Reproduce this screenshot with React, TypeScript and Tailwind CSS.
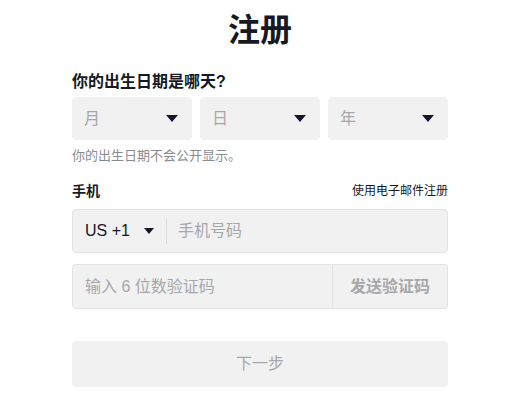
const Caret = ({ small }: { small?: boolean }) =>
  small ? (
    <svg width="10" height="6" viewBox="0 0 10 6" className="shrink-0">
      <path d="M0 0h10L5 6z" fill="#161823" />
    </svg>
  ) : (
    <svg width="12" height="7" viewBox="0 0 12 7" className="shrink-0">
      <path d="M0 0h12L6 7z" fill="#161823" />
    </svg>
  );

const SelectBox = ({ label }: { label: string }) => (
  <div className="flex h-[43px] flex-1 items-center justify-between rounded-[4px] bg-[#f1f1f2] pl-3 pr-[14px]">
    <span className="text-[16px] text-[#a7a7ab]">{label}</span>
    <Caret />
  </div>
);

export default function App() {
  return (
    <div
      className="min-h-[394px] bg-white text-[#161823]"
      style={{ fontFamily: '"Liberation Sans", "Noto Sans CJK SC", sans-serif' }}
    >
      <div className="ml-[72px] w-[376px]">
        <h1 className="pt-[10px] text-center text-[32px] font-bold leading-[40px]">注册</h1>

        <div className="mt-[20px] text-[16px] font-bold leading-[24px]">你的出生日期是哪天?</div>

        <div className="mt-[3px] flex gap-2">
          <SelectBox label="月" />
          <SelectBox label="日" />
          <SelectBox label="年" />
        </div>

        <p className="mt-[7px] text-[13px] leading-[18px] text-[#8a8b91]">你的出生日期不会公开显示。</p>

        <div className="mt-[16px] flex items-center justify-between leading-[20px]">
          <span className="text-[14px] font-bold">手机</span>
          <a href="#" className="text-[12px] text-[#161823]">使用电子邮件注册</a>
        </div>

        <div className="mt-[8px] flex h-[44px] items-center rounded-[4px] border border-[#e3e3e4] bg-[#f1f1f2]">
          <div className="flex items-center gap-[14px] pl-3 pr-[12px]">
            <span className="text-[16px]">US +1</span>
            <Caret small />
          </div>
          <div className="h-[26px] w-px bg-[#dcdcde]" />
          <span className="pl-[11px] text-[16px] text-[#a7a7ab]">手机号码</span>
        </div>

        <div className="mt-[11px] flex h-[45px]">
          <div className="flex flex-1 items-center rounded-l-[4px] border border-[#e3e3e4] bg-[#f1f1f2] pl-3">
            <span className="text-[16px] text-[#a7a7ab]">输入 6 位数验证码</span>
          </div>
          <button className="w-[115px] rounded-r-[4px] border border-l-0 border-[#e3e3e4] bg-[#f1f1f2] text-[16px] font-bold text-[#a7a7ab]">
            发送验证码
          </button>
        </div>

        <button className="mt-[32px] h-[46px] w-full rounded-[4px] bg-[#f1f1f2] text-[16px] text-[#a7a7ab]">
          下一步
        </button>
      </div>
    </div>
  );
}
